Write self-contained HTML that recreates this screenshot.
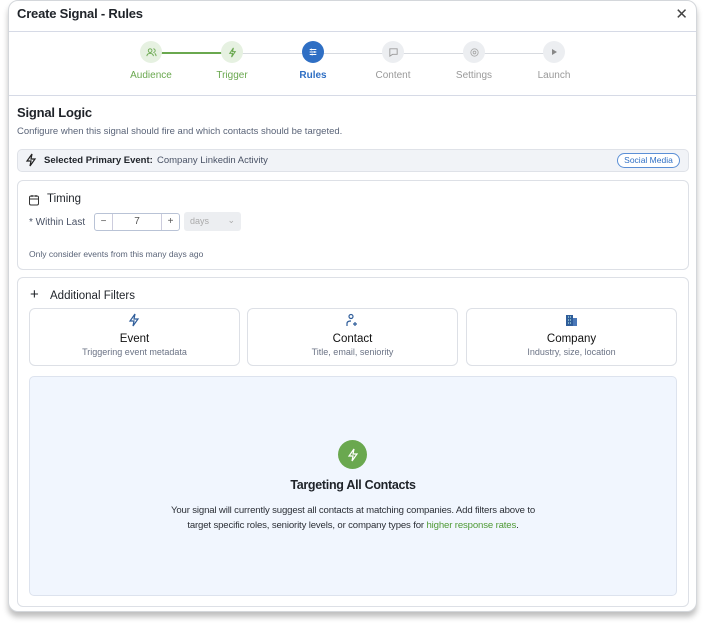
<!DOCTYPE html>
<html><head><style>
*{box-sizing:border-box;margin:0;padding:0}
body{width:705px;height:628px;background:#fff;font-family:"Liberation Sans",sans-serif;position:relative;overflow:hidden;color:#1f2329}
.win{position:absolute;left:8px;top:0;width:689px;height:612px;border:1px solid #d4d7db;border-radius:10px;background:#fff;box-shadow:0 5px 6px rgba(0,0,0,.25);overflow:hidden}
.abs{position:absolute}
.title{left:8px;top:5px;font-size:13px;font-weight:bold;letter-spacing:-.2px}
.x{right:8px;top:4px;font-size:15px;color:#444}
.hl{left:0;right:0;height:1px;background:#d6dae6}
.step{width:22px;height:22px;border-radius:50%;top:40px;display:flex;align-items:center;justify-content:center}
.lbl{top:69px;font-size:10px;width:80px;text-align:center}
.card{border:1px solid #dde0e6;border-radius:6px;background:#fff}
.fc{top:307px;width:211px;height:58px;text-align:center}
.fc b{display:block;font-size:11.5px;font-weight:normal;margin-top:24px;color:#111}
.fc span{display:block;font-size:9px;color:#6b7385;margin-top:2px}
</style></head><body>
<div class="win">
<div class="abs title">Create Signal - Rules</div>
<div class="abs x">✕</div>
<div class="abs hl" style="top:30px"></div>
<div class="abs" style="left:152px;top:51px;width:70px;height:2px;background:#6aa84f"></div>
<div class="abs" style="left:222px;top:52px;width:320px;height:1px;background:#d8dbe0"></div>
<div class="abs step" style="left:131px;background:#e6f1e1"><svg width="11" height="11" viewBox="0 0 12 12" fill="none" stroke="#6aa84f" stroke-width="1"><circle cx="4.5" cy="4" r="2"/><path d="M1 10c0-2 1.5-3 3.5-3s3.5 1 3.5 3M8 2a2 2 0 010 4M9.5 7c1 .5 1.5 1.5 1.5 3"/></svg></div>
<div class="abs step" style="left:212px;background:#e6f1e1"><svg width="11" height="11" viewBox="0 0 12 12" fill="none" stroke="#6aa84f" stroke-width="1.1"><path d="M7 1L3 7h3l-1 4 4-6H6z"/></svg></div>
<div class="abs step" style="left:293px;background:#2f6fc4"><svg width="10" height="10" viewBox="0 0 12 12" stroke="#fff" stroke-width="1.2"><path d="M2 3h8M2 6h8M2 9h8"/><path d="M4 2v2M8 5v2M5 8v2"/></svg></div>
<div class="abs step" style="left:373px;background:#eceef1"><svg width="11" height="11" viewBox="0 0 12 12" fill="none" stroke="#999" stroke-width="1"><path d="M2 2h8v6H5l-3 2z"/></svg></div>
<div class="abs step" style="left:454px;background:#eceef1"><svg width="11" height="11" viewBox="0 0 12 12" fill="none" stroke="#aaa" stroke-width="1"><circle cx="6" cy="6" r="4"/><circle cx="6" cy="6" r="1.5"/></svg></div>
<div class="abs step" style="left:534px;background:#eceef1"><svg width="8" height="8" viewBox="0 0 8 8"><path d="M2 1l5 3-5 3z" fill="#888"/></svg></div>
<div class="abs lbl" style="left:102px;color:#6aa84f">Audience</div>
<div class="abs lbl" style="left:183px;color:#6aa84f">Trigger</div>
<div class="abs lbl" style="left:264px;color:#2f6fc4;font-weight:bold">Rules</div>
<div class="abs lbl" style="left:344px;color:#999">Content</div>
<div class="abs lbl" style="left:425px;color:#999">Settings</div>
<div class="abs lbl" style="left:505px;color:#999">Launch</div>
<div class="abs hl" style="top:94px"></div>
<div class="abs" style="left:8px;top:104px;font-size:13px;font-weight:bold;letter-spacing:-.2px">Signal Logic</div>
<div class="abs" style="left:8px;top:125px;font-size:9.5px;color:#5a6478">Configure when this signal should fire and which contacts should be targeted.</div>
<div class="abs" style="left:8px;top:148px;width:672px;height:23px;background:#f1f3f7;border:1px solid #dfe2e8;border-radius:5px"></div>
<svg class="abs" style="left:16px;top:152px" width="12" height="14" viewBox="0 0 12 14" fill="none" stroke="#222" stroke-width="1.2"><path d="M7 1L2 8h4l-1 5 5-7H6z"/></svg>
<div class="abs" style="left:35px;top:154px;font-size:9.5px;font-weight:bold">Selected Primary Event:</div>
<div class="abs" style="left:148px;top:154px;font-size:9.5px;color:#4a5366">Company Linkedin Activity</div>
<div class="abs" style="left:608px;top:152px;width:63px;height:15px;border:1px solid #5b8fd6;border-radius:8px;font-size:8.5px;color:#2f6fc4;text-align:center;line-height:13px;background:#fff">Social Media</div>
<div class="abs card" style="left:8px;top:179px;width:672px;height:90px"></div>
<svg class="abs" style="left:19px;top:193px" width="12" height="12" viewBox="0 0 12 12" fill="none" stroke="#333" stroke-width="1"><rect x="1.5" y="2" width="9" height="9" rx="1.5"/><path d="M1.5 5h9M4 1v2M8 1v2"/></svg>
<div class="abs" style="left:38px;top:192px;font-size:11.5px">Timing</div>
<div class="abs" style="left:20px;top:216px;font-size:10px;color:#4a5366">* Within Last</div>
<div class="abs" style="left:85px;top:212px;width:86px;height:18px;border:1px solid #b9c3d6;border-radius:3px;background:#fff;font-size:10px;color:#555">
<div class="abs" style="left:0;top:0;width:18px;height:16px;border-right:1px solid #ccd;text-align:center;line-height:16px">−</div>
<div class="abs" style="left:18px;top:0;width:48px;text-align:center;line-height:16px">7</div>
<div class="abs" style="right:0;top:0;width:18px;height:16px;border-left:1px solid #ccd;text-align:center;line-height:16px">+</div></div>
<div class="abs" style="left:175px;top:211px;width:57px;height:19px;background:#eceef1;border-radius:3px;font-size:9px;color:#aaa;padding:4px 0 0 6px">days<span style="position:absolute;right:6px;top:3px">⌄</span></div>
<div class="abs" style="left:20px;top:248px;font-size:8.5px;color:#5a6478">Only consider events from this many days ago</div>
<div class="abs card" style="left:8px;top:276px;width:672px;height:330px"></div>
<div class="abs" style="left:21px;top:285px;font-size:15px">+</div>
<div class="abs" style="left:41px;top:289px;font-size:11.5px">Additional Filters</div>
<div class="abs card fc" style="left:20px"><b>Event</b><span>Triggering event metadata</span></div>
<div class="abs card fc" style="left:238px"><b>Contact</b><span>Title, email, seniority</span></div>
<div class="abs card fc" style="left:457px"><b>Company</b><span>Industry, size, location</span></div>
<svg class="abs" style="left:119px;top:312px" width="12" height="14" viewBox="0 0 12 14" fill="none" stroke="#2f5d9a" stroke-width="1.2"><path d="M7 1L2 8h4l-1 5 5-7H6z"/></svg>
<svg class="abs" style="left:336px;top:312px" width="14" height="14" viewBox="0 0 14 14" fill="none" stroke="#2f5d9a" stroke-width="1.2"><circle cx="6" cy="3.5" r="2"/><path d="M2 13v-2.5C2 8.5 3.5 8 6 8M10 9v4M8 11h4"/></svg>
<svg class="abs" style="left:556px;top:313px" width="13" height="13" viewBox="0 0 13 13"><rect x="1" y="1" width="7" height="11" fill="#2f5d9a"/><rect x="8" y="4" width="4" height="8" fill="#4a78b8"/><path d="M3 3h1M5 3h1M3 6h1M5 6h1M3 9h1M5 9h1" stroke="#cfe" stroke-width="1"/></svg>
<div class="abs" style="left:20px;top:375px;width:648px;height:220px;background:#f1f6fe;border:1px solid #dde3ee;border-radius:5px"></div>
<div class="abs" style="left:329px;top:439px;width:29px;height:29px;border-radius:50%;background:#6aa84f;display:flex;align-items:center;justify-content:center"><svg width="12" height="14" viewBox="0 0 12 14" fill="none" stroke="#fff" stroke-width="1.2"><path d="M7 1L2 8h4l-1 5 5-7H6z"/></svg></div>
<div class="abs" style="left:180px;top:477px;width:328px;text-align:center;font-size:12.5px;font-weight:bold;letter-spacing:-.3px">Targeting All Contacts</div>
<div class="abs" style="left:114px;top:502px;width:460px;text-align:center;font-size:9.6px;line-height:15px;color:#2b2f36;letter-spacing:-.15px;white-space:nowrap">Your signal will currently suggest all contacts at matching companies. Add filters above to<br>target specific roles, seniority levels, or company types for <span style="color:#4f9a36">higher response rates</span>.</div>
</div>
</body></html>
